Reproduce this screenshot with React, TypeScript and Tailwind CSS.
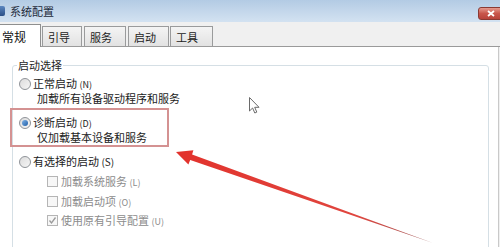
import React from 'react';

const font = { fontFamily: '"Noto Sans CJK SC", "Noto Sans", sans-serif' };

function Radio({ checked = false }: { checked?: boolean }) {
  return (
    <span className="relative w-[12px] h-[12px] shrink-0 rounded-full border border-[#8f9398] bg-gradient-to-br from-[#dcdcdc] to-[#f6f6f6] flex items-center justify-center">
      {checked && (
        <span className="w-[6px] h-[6px] rounded-full bg-gradient-to-br from-[#7fb2e6] to-[#1d5fa8]" />
      )}
    </span>
  );
}

function Check({ checked = false }: { checked?: boolean }) {
  return (
    <span className="w-[11px] h-[11px] shrink-0 border border-[#b5b5b5] bg-[#f7f7f7] flex items-center justify-center">
      {checked && (
        <svg width="9" height="9" viewBox="0 0 9 9">
          <path d="M1.5 4.5 L3.5 7 L7.5 1.5" stroke="#9a9a9a" strokeWidth="1.3" fill="none" />
        </svg>
      )}
    </span>
  );
}

export default function App() {
  const tabs = [
    { label: '引导', cls: 'w-[40px] ml-[1px]' },
    { label: '服务', cls: 'w-[42px] ml-[2px]' },
    { label: '启动', cls: 'w-[41px] ml-[2px]' },
    { label: '工具', cls: 'w-[43px] ml-[1px]' },
  ];

  return (
    <div style={font} className="relative w-[500px] h-[247px] overflow-hidden bg-[#f0f0f0] text-[11px] leading-[15px] text-[#1b1b1b]">
      {/* Title bar */}
      <div className="h-[22px] flex items-center bg-gradient-to-b from-[#b3cbe4] to-[#d3e2f1]">
        <span className="w-[5px] h-[10px] rounded-r-[2px] bg-gradient-to-b from-[#5b87c0] to-[#2c4f86]" />
        <span className="ml-[5px] text-[11px] text-[#1d2a3a]">系统配置</span>
        <span className="ml-auto mr-[-4px] mt-[5px] w-[26px] h-[13px] rounded-[3px] border border-[#8a3a33] bg-gradient-to-b from-[#e59a8f] via-[#c8564b] to-[#b8433a] flex items-center justify-start pl-[8px]">
          <svg width="8" height="7" viewBox="0 0 8 7">
            <path d="M1 1 L7 6 M7 1 L1 6" stroke="#ffffff" strokeWidth="1.8" />
          </svg>
        </span>
      </div>

      {/* Tabs */}
      <div className="h-[25px] flex items-end bg-[#f0f0f0] border-b border-[#9a9a9a]">
        <div className="relative z-10 -mb-px h-[23px] w-[41px] bg-white border-t border-r border-[#8e8f8f] flex items-center pl-[2px] text-[12px] text-[#111]">
          常规
        </div>
        {tabs.map(t => (
          <div
            key={t.label}
            className={`${t.cls} h-[20px] border border-b-0 border-[#9a9b9c] bg-gradient-to-b from-[#f4f4f4] to-[#e2e2e2] flex items-center pl-[5px] pt-[1px] text-[#222]`}
          >
            {t.label}
          </div>
        ))}
      </div>

      {/* Panel */}
      <div className="w-[499px] h-[200px] bg-white border-r border-[#c9c9c9] pt-[11px] pl-[12px]">
        <fieldset className="w-[477px] h-[220px] border border-[#d5dfe5] rounded-[3px]">
          <legend className="ml-[4px] px-[1px] leading-[14px] text-[#1e1e1e]">启动选择</legend>

          <div className="mt-[4px] flex items-center h-[15px] pl-[6px]">
            <Radio />
            <span className="ml-[2px]">正常启动 <span className="text-[9px]">(N)</span></span>
          </div>
          <div className="h-[15px] pl-[24px]">加载所有设备驱动程序和服务</div>

          <div className="-ml-[3px] mt-[2px] w-[159px] h-[39px] border-2 border-[#d49292] pt-[5px]">
            <div className="flex items-center h-[15px] pl-[7px]">
              <Radio checked />
              <span className="ml-[2px]">诊断启动 <span className="text-[9px]">(D)</span></span>
            </div>
            <div className="h-[15px] pl-[25px]">仅加载基本设备和服务</div>
          </div>

          <div className="mt-[7px] flex items-center h-[15px] pl-[6px]">
            <Radio />
            <span className="ml-[2px]">有选择的启动 <span className="text-[10px]">(S)</span></span>
          </div>

          <div className="mt-[5px] flex items-center h-[15px] pl-[34px] text-[#8c8c8c]">
            <Check />
            <span className="ml-[3px]">加载系统服务 <span className="text-[9px]">(L)</span></span>
          </div>
          <div className="mt-[5px] flex items-center h-[15px] pl-[34px] text-[#8c8c8c]">
            <Check />
            <span className="ml-[3px]">加载启动项 <span className="text-[9px]">(O)</span></span>
          </div>
          <div className="mt-[4px] flex items-center h-[15px] pl-[34px] text-[#8c8c8c]">
            <Check checked />
            <span className="ml-[3px]">使用原有引导配置 <span className="text-[9px]">(U)</span></span>
          </div>
        </fieldset>
      </div>

      {/* Mouse cursor */}
      <svg className="absolute left-[249px] top-[97px]" width="12" height="18" viewBox="0 0 12 18">
        <path d="M0.5 0.5 L0.5 14 L3.6 11 L5.8 16 L7.8 15.1 L5.7 10.3 L10 10.3 Z" fill="#ffffff" stroke="#6a6a6a" strokeWidth="1" />
      </svg>

      {/* Red annotation arrow */}
      <svg className="absolute left-0 top-0 pointer-events-none" width="500" height="247" viewBox="0 0 500 247">
        <defs>
          <linearGradient id="arrowFade" x1="176" y1="152" x2="433" y2="243" gradientUnits="userSpaceOnUse">
            <stop offset="0" stopColor="#e2322c" />
            <stop offset="0.7" stopColor="#e0463f" />
            <stop offset="1" stopColor="#9a5a5a" />
          </linearGradient>
        </defs>
        <polygon
          points="176,152 193.4,150.2 192.1,154.6 433,243 190.2,160 188.4,164.6"
          fill="url(#arrowFade)"
        />
      </svg>
    </div>
  );
}
